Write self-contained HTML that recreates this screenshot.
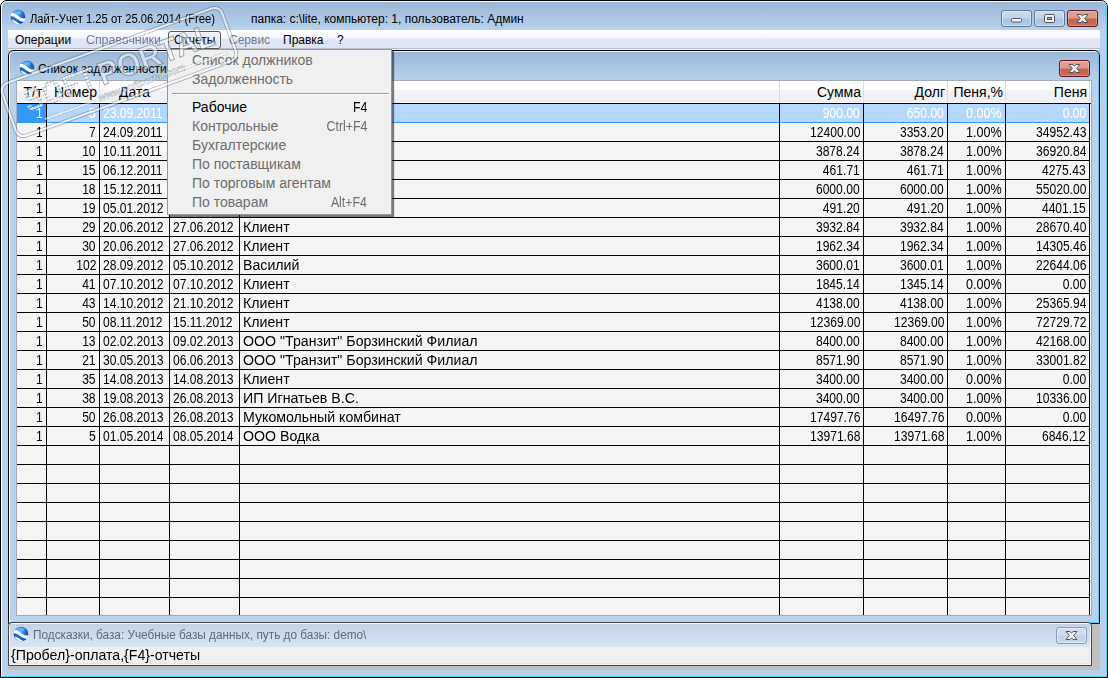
<!DOCTYPE html>
<html lang="ru"><head><meta charset="utf-8"><title>Лайт-Учет</title>
<style>
*{box-sizing:border-box;margin:0;padding:0}
html,body{width:1108px;height:678px;overflow:hidden;background:#fff}
body{font-family:"Liberation Sans",sans-serif;position:relative;color:#000}
.abs{position:absolute}
#win{position:absolute;left:0;top:0;width:1108px;height:678px;border:1px solid #000;border-radius:7px 7px 0 0;background:#b9d1ea;overflow:hidden}
#win .inner{position:absolute;left:0;top:0;width:1106px;height:676px;border-radius:6px 6px 0 0;border-top:1px solid #f4f8fc;border-left:1px solid #fff;border-right:1px solid #4dd2fa;border-bottom:1px solid #4dd2fa}
#tbar{position:absolute;left:0;top:1px;width:1106px;height:28px;background:linear-gradient(#9bb7d8,#a9c4e2 45%,#b9d1ea)}
.ttext{position:absolute;top:11px;font-size:12px;line-height:15px;white-space:pre;color:#000}
.ico{position:absolute;width:16px;height:16px}
/* caption buttons */
.cb{position:absolute;border:1px solid #5e7997;border-radius:3px;background:linear-gradient(#c9d9ec 0,#c3d5ea 48%,#a9c2de 52%,#b4cbe5 100%);box-shadow:inset 0 0 0 1px rgba(255,255,255,.45)}
.cb.red{border-color:#5a1a2a;background:linear-gradient(#e3a392 0,#dc9a88 48%,#c5604c 52%,#cc6a55 100%);box-shadow:inset 0 0 0 1px rgba(255,255,255,.25)}
.cb.gray{border-color:#8b9cb1;background:linear-gradient(#d3dfee 0,#cedbec 48%,#c1d0e4 52%,#c9d8ea 100%)}
.cb svg{position:absolute;left:0;top:0}
/* menubar */
#mbar{position:absolute;left:8px;top:30px;width:1092px;height:18px;background:linear-gradient(#ffffff 0,#f4f6fb 45%,#e2e6f5 50%,#dfe4f4 100%)}
#mline{position:absolute;left:8px;top:48px;width:1092px;height:2px;background:linear-gradient(#b9bfcf 50%,#f0f2f8 50%)}
.mi{position:absolute;top:33px;font-size:12px;line-height:14px;white-space:pre}
.mi.dis{color:#6d7d90}
#mhot{position:absolute;left:168px;top:31px;width:53px;height:18px;border:1px solid #555;border-radius:3px;background:linear-gradient(#eef1f6,#dde3ed);box-shadow:inset 0 0 0 1px rgba(255,255,255,.6)}
/* mdi */
#mdi{position:absolute;left:8px;top:50px;width:1092px;height:620px;background:#c0c0c0}
#child{position:absolute;left:8px;top:50px;width:1092px;height:574px;border:1px solid #000;border-radius:6px 6px 0 0;background:#b9d1ea;overflow:hidden}
#child .lite{position:absolute;left:0;top:0;width:1090px;height:572px;border-radius:5px 5px 0 0;border-top:1px solid #eef4fb;border-left:1px solid #fff;border-right:1px solid #4dd2fa;border-bottom:1px solid #4dd2fa}
#ctbar{position:absolute;left:0;top:1px;width:1090px;height:29px;background:linear-gradient(#9bb7d8,#a9c4e2 45%,#b9d1ea)}
/* grid */
#grid{position:absolute;left:16px;top:80px;width:1076px;height:536px;background:#f5f5f5;overflow:hidden;font-size:14px;border:1px solid #a3abb9}
.ghead{position:absolute;left:0;top:0;width:1074px;height:23px;background:linear-gradient(#ffffff 0,#ffffff 35%,#f3f4f7 45%,#eef0f4 94%,#fbfbfc 96%);border-bottom:1px solid #000}
.hc{position:absolute;top:0;height:22px;border-right:1px solid #dcdcdc;line-height:23px;white-space:pre;font-size:14px}
.hc span{display:inline-block;transform:scaleX(1)}
.hc.hc_{text-align:center}
.hc.hc{text-align:center}
.hc.hr{text-align:right;padding-right:2px}
.hc.hr span{transform-origin:right center}
.grow{position:absolute;left:0;width:1073px;height:19px;border-bottom:1px solid #000}
.grow.sel{background:#b5d8ff;color:#fff;border-bottom:1px solid #3399ff;border-top:0}
.grow.sel .c:first-child{background:#3399ff}
.c{position:absolute;top:0;height:18px;line-height:18px;white-space:pre;overflow:visible}
.c span{display:inline-block}
.c.n span{transform:scaleX(.863)}
.c.t span{transform:scaleX(1.012)}
.c.p span{transform:scaleX(.9)}
.c.r{text-align:right;padding-right:3px}
.c.r span{transform-origin:right center}
.c.l{text-align:left;padding-left:3px}
.c.l span{transform-origin:left center}
.vl{position:absolute;top:22px;width:1px;height:512px;background:#000}
/* popup menu */
#pop{position:absolute;left:167px;top:49px;width:225px;height:166px;background:#f0f0f0;border:1px solid #979797;box-shadow:2px 2px 1px rgba(0,0,0,.5)}
.pi{position:absolute;left:24px;font-size:14px;line-height:19px;white-space:pre;color:#6d6d6d}
.pi span,.ps span{display:inline-block;transform-origin:left center}
.ps span{transform:scaleX(.88)}
.ps{position:absolute;right:24px;font-size:14px;line-height:19px;white-space:pre;color:#6d6d6d;text-align:right}
.ps span{transform-origin:right center}
.pi.en,.ps.en{color:#000}
#psep{position:absolute;left:4px;top:43px;width:217px;height:2px;background:linear-gradient(#a0a0a0 50%,#ffffff 50%)}
/* hint window */
#hint{position:absolute;left:8px;top:622px;width:1084px;height:44px;border:1px solid #444;border-radius:4px 4px 0 0;background:#dbe7f5;overflow:hidden;box-shadow:inset 0 0 0 1px #f3f8fd}
#htbar{position:absolute;left:1px;top:1px;width:1080px;height:23px;background:linear-gradient(#c3d3e6,#d9e5f3)}
#hbody{position:absolute;left:2px;top:24px;width:1078px;height:16px;background:#f0f0f0}
#htext{position:absolute;left:11px;top:647px;font-size:14px;line-height:16px;white-space:pre}
#htext span{display:inline-block;transform:scaleX(1.01);transform-origin:left center}

/* watermark stamp */
#wm{position:absolute;left:1px;top:43px;width:236px;height:58px;transform:rotate(-20deg);transform-origin:50% 50%;border:2px solid rgba(255,255,255,.6);border-radius:9px;box-shadow:0 0 0 1px rgba(70,80,95,.38),inset 0 0 0 1px rgba(70,80,95,.38);pointer-events:none;z-index:50;font-family:"Liberation Sans",sans-serif}
#wm .soft{position:absolute;left:17px;top:5px;font:bold 32px/36px "Liberation Sans",sans-serif;transform:scaleX(.88);transform-origin:left center;color:transparent;background:linear-gradient(90deg,rgba(90,100,115,.35) 1px,transparent 1px) 0 0/3.5px 3.5px,linear-gradient(rgba(90,100,115,.4) 1px,rgba(255,255,255,.78) 1px) 0 0/3.5px 3.5px;-webkit-background-clip:text;background-clip:text}
#wm .portal{position:absolute;left:96px;top:5px;font:bold 32px/36px "Liberation Sans",sans-serif;transform:scaleX(.94);transform-origin:left center;color:rgba(255,255,255,.5);-webkit-text-stroke:1px rgba(70,80,95,.48)}
#wm .www{position:absolute;left:88px;top:39px;font:italic bold 10px/12px "Liberation Sans",sans-serif;color:rgba(255,255,255,.55);-webkit-text-stroke:.5px rgba(70,80,95,.45);white-space:pre;letter-spacing:-.2px}
#wm .ln{position:absolute;top:45px;height:2px;background:rgba(255,255,255,.5);box-shadow:0 0 0 .5px rgba(70,80,95,.3)}
</style></head><body>
<div id="win">
 <div id="tbar"></div>
 <div class="inner"></div>
</div>
<!-- title -->
<svg class="ico" style="left:10px;top:9px" viewBox="0 0 16 16"><defs><radialGradient id="g1" cx=".45" cy=".35" r=".7"><stop offset="0" stop-color="#4aa8f0"/><stop offset=".6" stop-color="#1464c8"/><stop offset="1" stop-color="#0a3c8c"/></radialGradient></defs><circle cx="8" cy="8" r="7.3" fill="url(#g1)"/><ellipse cx="7.2" cy="3.4" rx="4.4" ry="2" fill="#8fd0fb" opacity=".55"/><path d="M1 4.200C3.500 3.300 6 5.100 8.200 6.900C10.500 8.800 12.800 9.900 15.200 9.200C15.100 10.600 14.800 11.700 14.200 12.500C11.600 13.100 9 11.500 6.800 9.700C4.600 8 2.800 7 .800 7.500C.700 6.300 .800 5.100 1 4.200Z" fill="#fff"/><path d="M1.700 10.400C3.500 10.500 5.500 11.900 7 13.100C8 13.900 9 14.500 10.200 14.800C8.500 15.500 6.500 15.400 5 14.600C3.500 13.800 2.200 12.300 1.700 10.400Z" fill="#fff" opacity=".92"/></svg>
<div class="ttext" style="left:30px;top:12px;transform:scaleX(.936);transform-origin:left center">Лайт-Учет 1.25 от 25.06.2014 (Free)</div>
<div class="ttext" style="left:251px;top:12px">папка: c:\lite, компьютер: 1, пользователь: Админ</div>
<div class="cb" style="left:1001px;top:10px;width:31px;height:17px"><svg width="29" height="15" viewBox="0 0 29 15"><rect x="9.500" y="7.500" width="10" height="3.500" rx="1.200" fill="#f4f4f4" stroke="#50555c"/></svg></div>
<div class="cb" style="left:1034px;top:10px;width:31px;height:17px"><svg width="29" height="15" viewBox="0 0 29 15"><rect x="9.500" y="3.500" width="10" height="8" rx="1" fill="#f4f4f4" stroke="#50555c"/><rect x="12.500" y="6.500" width="4" height="2" fill="#9ab0cb" stroke="#50555c"/></svg></div>
<div class="cb red" style="left:1067px;top:10px;width:31px;height:17px"><svg width="29" height="15" viewBox="0 0 29 15"><path d="M9 3.500h4l1.500 1.700 1.500-1.700h4l-3.400 4 3.400 4h-4l-1.500-1.700-1.500 1.700h-4l3.400-4z" fill="#f4f4f4" stroke="#50555c" stroke-width="1" stroke-linejoin="round"/></svg></div>
<!-- menubar -->
<div id="mbar"></div><div id="mline"></div>
<div id="mhot"></div>
<div class="mi" style="left:15px">Операции</div>
<div class="mi dis" style="left:86px;transform:scaleX(1.03);transform-origin:left center">Справочники</div>
<div class="mi" style="left:174px">Отчеты</div>
<div class="mi dis" style="left:229px">Сервис</div>
<div class="mi" style="left:283px">Правка</div>
<div class="mi" style="left:337px">?</div>
<!-- mdi -->
<div id="mdi"></div>
<div id="child"><div id="ctbar"></div><div class="lite"></div></div>
<svg class="ico" style="left:18.5px;top:59.5px" viewBox="0 0 16 16"><circle cx="8" cy="8" r="7.3" fill="url(#g1)"/><ellipse cx="7.2" cy="3.4" rx="4.4" ry="2" fill="#8fd0fb" opacity=".55"/><path d="M1 4.200C3.500 3.300 6 5.100 8.200 6.900C10.500 8.800 12.800 9.900 15.200 9.200C15.100 10.600 14.800 11.700 14.200 12.500C11.600 13.100 9 11.500 6.800 9.700C4.600 8 2.800 7 .800 7.500C.700 6.300 .800 5.100 1 4.200Z" fill="#fff"/><path d="M1.700 10.400C3.500 10.500 5.500 11.900 7 13.100C8 13.900 9 14.500 10.200 14.800C8.500 15.500 6.500 15.400 5 14.600C3.500 13.800 2.200 12.300 1.700 10.400Z" fill="#fff" opacity=".92"/></svg>
<div class="ttext" style="left:38px;top:62px">Список задолженности</div>
<div class="cb red" style="left:1059px;top:60px;width:31px;height:17px"><svg width="29" height="15" viewBox="0 0 29 15"><path d="M9 3.500h4l1.500 1.700 1.500-1.700h4l-3.400 4 3.400 4h-4l-1.500-1.700-1.500 1.700h-4l3.400-4z" fill="#f4f4f4" stroke="#50555c" stroke-width="1" stroke-linejoin="round"/></svg></div>
<div id="grid">
<div class="ghead">
<div class="hc hc" style="left:0px;width:30px;padding-left:3px"><span>Т/т</span></div>
<div class="hc hc" style="left:30px;width:53px;padding-left:5px"><span>Номер</span></div>
<div class="hc hc" style="left:83px;width:70px"><span>Дата</span></div>
<div class="hc hc" style="left:153px;width:70px"><span></span></div>
<div class="hc hc" style="left:223px;width:540px"><span></span></div>
<div class="hc hr" style="left:763px;width:84px"><span>Сумма</span></div>
<div class="hc hr" style="left:847px;width:84px"><span>Долг</span></div>
<div class="hc hr" style="left:931px;width:58px"><span>Пеня,%</span></div>
<div class="hc hr" style="left:989px;width:84px"><span>Пеня</span></div>
</div>
<div class="grow sel" style="top:23px">
<div class="c r n" style="left:0px;width:29px"><span>1</span></div>
<div class="c r n" style="left:30px;width:52px"><span>5</span></div>
<div class="c l n" style="left:83px;width:69px"><span>23.09.2011</span></div>
<div class="c r n" style="left:763px;width:83px"><span>900.00</span></div>
<div class="c r n" style="left:847px;width:83px"><span>650.00</span></div>
<div class="c r p" style="left:931px;width:57px"><span>0.00%</span></div>
<div class="c r n" style="left:989px;width:83px"><span>0.00</span></div>
</div>
<div class="grow" style="top:42px">
<div class="c r n" style="left:0px;width:29px"><span>1</span></div>
<div class="c r n" style="left:30px;width:52px"><span>7</span></div>
<div class="c l n" style="left:83px;width:69px"><span>24.09.2011</span></div>
<div class="c r n" style="left:763px;width:83px"><span>12400.00</span></div>
<div class="c r n" style="left:847px;width:83px"><span>3353.20</span></div>
<div class="c r p" style="left:931px;width:57px"><span>1.00%</span></div>
<div class="c r n" style="left:989px;width:83px"><span>34952.43</span></div>
</div>
<div class="grow" style="top:61px">
<div class="c r n" style="left:0px;width:29px"><span>1</span></div>
<div class="c r n" style="left:30px;width:52px"><span>10</span></div>
<div class="c l n" style="left:83px;width:69px"><span>10.11.2011</span></div>
<div class="c r n" style="left:763px;width:83px"><span>3878.24</span></div>
<div class="c r n" style="left:847px;width:83px"><span>3878.24</span></div>
<div class="c r p" style="left:931px;width:57px"><span>1.00%</span></div>
<div class="c r n" style="left:989px;width:83px"><span>36920.84</span></div>
</div>
<div class="grow" style="top:80px">
<div class="c r n" style="left:0px;width:29px"><span>1</span></div>
<div class="c r n" style="left:30px;width:52px"><span>15</span></div>
<div class="c l n" style="left:83px;width:69px"><span>06.12.2011</span></div>
<div class="c r n" style="left:763px;width:83px"><span>461.71</span></div>
<div class="c r n" style="left:847px;width:83px"><span>461.71</span></div>
<div class="c r p" style="left:931px;width:57px"><span>1.00%</span></div>
<div class="c r n" style="left:989px;width:83px"><span>4275.43</span></div>
</div>
<div class="grow" style="top:99px">
<div class="c r n" style="left:0px;width:29px"><span>1</span></div>
<div class="c r n" style="left:30px;width:52px"><span>18</span></div>
<div class="c l n" style="left:83px;width:69px"><span>15.12.2011</span></div>
<div class="c r n" style="left:763px;width:83px"><span>6000.00</span></div>
<div class="c r n" style="left:847px;width:83px"><span>6000.00</span></div>
<div class="c r p" style="left:931px;width:57px"><span>1.00%</span></div>
<div class="c r n" style="left:989px;width:83px"><span>55020.00</span></div>
</div>
<div class="grow" style="top:118px">
<div class="c r n" style="left:0px;width:29px"><span>1</span></div>
<div class="c r n" style="left:30px;width:52px"><span>19</span></div>
<div class="c l n" style="left:83px;width:69px"><span>05.01.2012</span></div>
<div class="c r n" style="left:763px;width:83px"><span>491.20</span></div>
<div class="c r n" style="left:847px;width:83px"><span>491.20</span></div>
<div class="c r p" style="left:931px;width:57px"><span>1.00%</span></div>
<div class="c r n" style="left:989px;width:83px"><span>4401.15</span></div>
</div>
<div class="grow" style="top:137px">
<div class="c r n" style="left:0px;width:29px"><span>1</span></div>
<div class="c r n" style="left:30px;width:52px"><span>29</span></div>
<div class="c l n" style="left:83px;width:69px"><span>20.06.2012</span></div>
<div class="c l n" style="left:153px;width:69px"><span>27.06.2012</span></div>
<div class="c l t" style="left:223px;width:539px"><span>Клиент</span></div>
<div class="c r n" style="left:763px;width:83px"><span>3932.84</span></div>
<div class="c r n" style="left:847px;width:83px"><span>3932.84</span></div>
<div class="c r p" style="left:931px;width:57px"><span>1.00%</span></div>
<div class="c r n" style="left:989px;width:83px"><span>28670.40</span></div>
</div>
<div class="grow" style="top:156px">
<div class="c r n" style="left:0px;width:29px"><span>1</span></div>
<div class="c r n" style="left:30px;width:52px"><span>30</span></div>
<div class="c l n" style="left:83px;width:69px"><span>20.06.2012</span></div>
<div class="c l n" style="left:153px;width:69px"><span>27.06.2012</span></div>
<div class="c l t" style="left:223px;width:539px"><span>Клиент</span></div>
<div class="c r n" style="left:763px;width:83px"><span>1962.34</span></div>
<div class="c r n" style="left:847px;width:83px"><span>1962.34</span></div>
<div class="c r p" style="left:931px;width:57px"><span>1.00%</span></div>
<div class="c r n" style="left:989px;width:83px"><span>14305.46</span></div>
</div>
<div class="grow" style="top:175px">
<div class="c r n" style="left:0px;width:29px"><span>1</span></div>
<div class="c r n" style="left:30px;width:52px"><span>102</span></div>
<div class="c l n" style="left:83px;width:69px"><span>28.09.2012</span></div>
<div class="c l n" style="left:153px;width:69px"><span>05.10.2012</span></div>
<div class="c l t" style="left:223px;width:539px"><span>Василий</span></div>
<div class="c r n" style="left:763px;width:83px"><span>3600.01</span></div>
<div class="c r n" style="left:847px;width:83px"><span>3600.01</span></div>
<div class="c r p" style="left:931px;width:57px"><span>1.00%</span></div>
<div class="c r n" style="left:989px;width:83px"><span>22644.06</span></div>
</div>
<div class="grow" style="top:194px">
<div class="c r n" style="left:0px;width:29px"><span>1</span></div>
<div class="c r n" style="left:30px;width:52px"><span>41</span></div>
<div class="c l n" style="left:83px;width:69px"><span>07.10.2012</span></div>
<div class="c l n" style="left:153px;width:69px"><span>07.10.2012</span></div>
<div class="c l t" style="left:223px;width:539px"><span>Клиент</span></div>
<div class="c r n" style="left:763px;width:83px"><span>1845.14</span></div>
<div class="c r n" style="left:847px;width:83px"><span>1345.14</span></div>
<div class="c r p" style="left:931px;width:57px"><span>0.00%</span></div>
<div class="c r n" style="left:989px;width:83px"><span>0.00</span></div>
</div>
<div class="grow" style="top:213px">
<div class="c r n" style="left:0px;width:29px"><span>1</span></div>
<div class="c r n" style="left:30px;width:52px"><span>43</span></div>
<div class="c l n" style="left:83px;width:69px"><span>14.10.2012</span></div>
<div class="c l n" style="left:153px;width:69px"><span>21.10.2012</span></div>
<div class="c l t" style="left:223px;width:539px"><span>Клиент</span></div>
<div class="c r n" style="left:763px;width:83px"><span>4138.00</span></div>
<div class="c r n" style="left:847px;width:83px"><span>4138.00</span></div>
<div class="c r p" style="left:931px;width:57px"><span>1.00%</span></div>
<div class="c r n" style="left:989px;width:83px"><span>25365.94</span></div>
</div>
<div class="grow" style="top:232px">
<div class="c r n" style="left:0px;width:29px"><span>1</span></div>
<div class="c r n" style="left:30px;width:52px"><span>50</span></div>
<div class="c l n" style="left:83px;width:69px"><span>08.11.2012</span></div>
<div class="c l n" style="left:153px;width:69px"><span>15.11.2012</span></div>
<div class="c l t" style="left:223px;width:539px"><span>Клиент</span></div>
<div class="c r n" style="left:763px;width:83px"><span>12369.00</span></div>
<div class="c r n" style="left:847px;width:83px"><span>12369.00</span></div>
<div class="c r p" style="left:931px;width:57px"><span>1.00%</span></div>
<div class="c r n" style="left:989px;width:83px"><span>72729.72</span></div>
</div>
<div class="grow" style="top:251px">
<div class="c r n" style="left:0px;width:29px"><span>1</span></div>
<div class="c r n" style="left:30px;width:52px"><span>13</span></div>
<div class="c l n" style="left:83px;width:69px"><span>02.02.2013</span></div>
<div class="c l n" style="left:153px;width:69px"><span>09.02.2013</span></div>
<div class="c l t" style="left:223px;width:539px"><span>ООО &quot;Транзит&quot; Борзинский Филиал</span></div>
<div class="c r n" style="left:763px;width:83px"><span>8400.00</span></div>
<div class="c r n" style="left:847px;width:83px"><span>8400.00</span></div>
<div class="c r p" style="left:931px;width:57px"><span>1.00%</span></div>
<div class="c r n" style="left:989px;width:83px"><span>42168.00</span></div>
</div>
<div class="grow" style="top:270px">
<div class="c r n" style="left:0px;width:29px"><span>1</span></div>
<div class="c r n" style="left:30px;width:52px"><span>21</span></div>
<div class="c l n" style="left:83px;width:69px"><span>30.05.2013</span></div>
<div class="c l n" style="left:153px;width:69px"><span>06.06.2013</span></div>
<div class="c l t" style="left:223px;width:539px"><span>ООО &quot;Транзит&quot; Борзинский Филиал</span></div>
<div class="c r n" style="left:763px;width:83px"><span>8571.90</span></div>
<div class="c r n" style="left:847px;width:83px"><span>8571.90</span></div>
<div class="c r p" style="left:931px;width:57px"><span>1.00%</span></div>
<div class="c r n" style="left:989px;width:83px"><span>33001.82</span></div>
</div>
<div class="grow" style="top:289px">
<div class="c r n" style="left:0px;width:29px"><span>1</span></div>
<div class="c r n" style="left:30px;width:52px"><span>35</span></div>
<div class="c l n" style="left:83px;width:69px"><span>14.08.2013</span></div>
<div class="c l n" style="left:153px;width:69px"><span>14.08.2013</span></div>
<div class="c l t" style="left:223px;width:539px"><span>Клиент</span></div>
<div class="c r n" style="left:763px;width:83px"><span>3400.00</span></div>
<div class="c r n" style="left:847px;width:83px"><span>3400.00</span></div>
<div class="c r p" style="left:931px;width:57px"><span>0.00%</span></div>
<div class="c r n" style="left:989px;width:83px"><span>0.00</span></div>
</div>
<div class="grow" style="top:308px">
<div class="c r n" style="left:0px;width:29px"><span>1</span></div>
<div class="c r n" style="left:30px;width:52px"><span>38</span></div>
<div class="c l n" style="left:83px;width:69px"><span>19.08.2013</span></div>
<div class="c l n" style="left:153px;width:69px"><span>26.08.2013</span></div>
<div class="c l t" style="left:223px;width:539px"><span>ИП Игнатьев В.С.</span></div>
<div class="c r n" style="left:763px;width:83px"><span>3400.00</span></div>
<div class="c r n" style="left:847px;width:83px"><span>3400.00</span></div>
<div class="c r p" style="left:931px;width:57px"><span>1.00%</span></div>
<div class="c r n" style="left:989px;width:83px"><span>10336.00</span></div>
</div>
<div class="grow" style="top:327px">
<div class="c r n" style="left:0px;width:29px"><span>1</span></div>
<div class="c r n" style="left:30px;width:52px"><span>50</span></div>
<div class="c l n" style="left:83px;width:69px"><span>26.08.2013</span></div>
<div class="c l n" style="left:153px;width:69px"><span>26.08.2013</span></div>
<div class="c l t" style="left:223px;width:539px"><span>Мукомольный комбинат</span></div>
<div class="c r n" style="left:763px;width:83px"><span>17497.76</span></div>
<div class="c r n" style="left:847px;width:83px"><span>16497.76</span></div>
<div class="c r p" style="left:931px;width:57px"><span>0.00%</span></div>
<div class="c r n" style="left:989px;width:83px"><span>0.00</span></div>
</div>
<div class="grow" style="top:346px">
<div class="c r n" style="left:0px;width:29px"><span>1</span></div>
<div class="c r n" style="left:30px;width:52px"><span>5</span></div>
<div class="c l n" style="left:83px;width:69px"><span>01.05.2014</span></div>
<div class="c l n" style="left:153px;width:69px"><span>08.05.2014</span></div>
<div class="c l t" style="left:223px;width:539px"><span>ООО Водка</span></div>
<div class="c r n" style="left:763px;width:83px"><span>13971.68</span></div>
<div class="c r n" style="left:847px;width:83px"><span>13971.68</span></div>
<div class="c r p" style="left:931px;width:57px"><span>1.00%</span></div>
<div class="c r n" style="left:989px;width:83px"><span>6846.12</span></div>
</div>
<div class="grow" style="top:365px">
</div>
<div class="grow" style="top:384px">
</div>
<div class="grow" style="top:403px">
</div>
<div class="grow" style="top:422px">
</div>
<div class="grow" style="top:441px">
</div>
<div class="grow" style="top:460px">
</div>
<div class="grow" style="top:479px">
</div>
<div class="grow" style="top:498px">
</div>
<div class="grow" style="top:517px">
</div>
<div class="vl" style="left:29px"></div>
<div class="vl" style="left:82px"></div>
<div class="vl" style="left:152px"></div>
<div class="vl" style="left:222px"></div>
<div class="vl" style="left:762px"></div>
<div class="vl" style="left:846px"></div>
<div class="vl" style="left:930px"></div>
<div class="vl" style="left:988px"></div>
<div class="vl" style="left:1072px"></div>
</div>
<!-- hint -->
<div id="hint"><div id="htbar"></div><div id="hbody"></div></div>
<svg class="ico" style="left:12.5px;top:626.2px" viewBox="0 0 16 16"><circle cx="8" cy="8" r="7.3" fill="url(#g1)"/><ellipse cx="7.2" cy="3.4" rx="4.4" ry="2" fill="#8fd0fb" opacity=".55"/><path d="M1 4.200C3.500 3.300 6 5.100 8.200 6.900C10.500 8.800 12.800 9.900 15.200 9.200C15.100 10.600 14.800 11.700 14.200 12.500C11.600 13.100 9 11.500 6.800 9.700C4.600 8 2.800 7 .800 7.500C.700 6.300 .800 5.100 1 4.200Z" fill="#fff"/><path d="M1.700 10.400C3.500 10.500 5.500 11.900 7 13.100C8 13.900 9 14.500 10.200 14.800C8.500 15.500 6.500 15.400 5 14.600C3.500 13.800 2.200 12.300 1.700 10.400Z" fill="#fff" opacity=".92"/></svg>
<div class="ttext" style="left:33px;top:628px;color:#5a6b7d;transform:scaleX(.982);transform-origin:left center">Подсказки, база: Учебные базы данных, путь до базы: demo\</div>
<div class="cb gray" style="left:1056px;top:627px;width:31px;height:17px"><svg width="29" height="15" viewBox="0 0 29 15"><path d="M9 3.500h4l1.500 1.700 1.500-1.700h4l-3.400 4 3.400 4h-4l-1.500-1.700-1.500 1.700h-4l3.400-4z" fill="#f4f4f4" stroke="#50555c" stroke-width="1" stroke-linejoin="round"/></svg></div>
<div id="htext"><span>{Пробел}-оплата,{F4}-отчеты</span></div>
<!-- popup -->
<div id="pop">
 <div class="pi" style="top:1px"><span>Список должников</span></div>
 <div class="pi" style="top:20px"><span>Задолженность</span></div>
 <div id="psep"></div>
 <div class="pi en" style="top:48px"><span>Рабочие</span></div><div class="ps en" style="top:48px"><span>F4</span></div>
 <div class="pi" style="top:67px"><span>Контрольные</span></div><div class="ps" style="top:67px"><span>Ctrl+F4</span></div>
 <div class="pi" style="top:86px"><span>Бухгалтерские</span></div>
 <div class="pi" style="top:105px"><span>По поставщикам</span></div>
 <div class="pi" style="top:124px"><span>По торговым агентам</span></div>
 <div class="pi" style="top:143px"><span>По товарам</span></div><div class="ps" style="top:143px"><span>Alt+F4</span></div>
</div>
<div id="wm"><span class="soft">SOFT</span><span class="portal">PORTAL</span><span class="www">www.softportal.com</span><div class="ln" style="left:30px;width:52px"></div><div class="ln" style="left:172px;width:52px"></div></div>
</body></html>
